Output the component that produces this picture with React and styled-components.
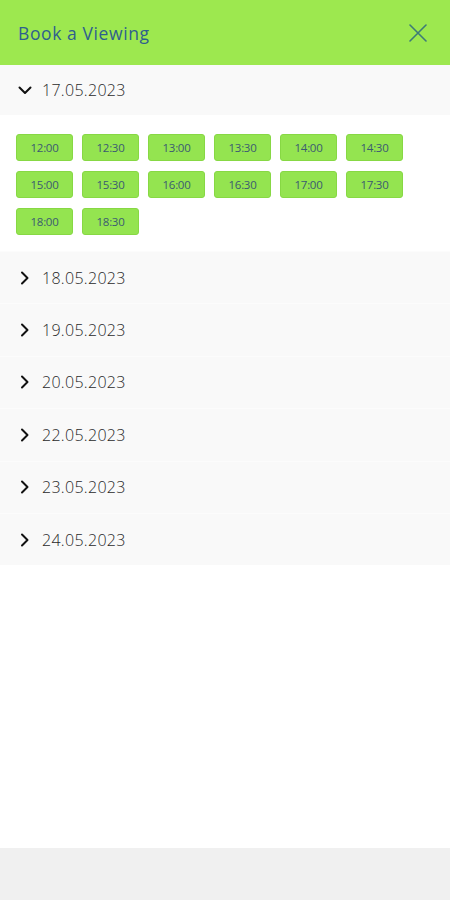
import React from "react";
import styled, { createGlobalStyle } from "styled-components";

const Global = createGlobalStyle`
  html, body { margin: 0; padding: 0; background: #fff; }
  body { font-family: "Open Sans", "Noto Sans", sans-serif; }
  * { box-sizing: border-box; }
`;

const Page = styled.div`
  width: 450px;
  height: 900px;
  display: flex;
  flex-direction: column;
  background: #fff;
`;

const Header = styled.header`
  height: 65px;
  flex: none;
  background: #9de84f;
  display: flex;
  align-items: center;
  justify-content: space-between;
  padding: 0 22px 0 18px;
`;

const Title = styled.h1`
  margin: 0;
  font-size: 17.5px;
  font-weight: 400;
  color: #2f5f8e;
  letter-spacing: 0.6px;
`;

const CloseBtn = styled.button`
  border: 0;
  background: none;
  padding: 0;
  width: 20px;
  height: 20px;
  display: flex;
  align-items: center;
  justify-content: center;
  cursor: pointer;
`;

const List = styled.div`
  flex: 1;
  display: flex;
  flex-direction: column;
`;

const DateRow = styled.div`
  height: ${(p) => (p.$first ? 50 : 52.4)}px;
  background: #f9f9f9;
  display: flex;
  align-items: center;
  gap: 9px;
  padding-left: 17px;
  border-top: ${(p) => (p.$first ? "none" : "1px solid #fcfcfc")};
`;

const DateText = styled.span`
  font-size: 16px;
  font-weight: 300;
  color: #2a2a2a;
  letter-spacing: 0.3px;
`;

const Slots = styled.div`
  padding: 19px 0 16px 16px;
  display: grid;
  grid-template-columns: repeat(6, max-content);
  column-gap: 9px;
  row-gap: 10px;
`;

const Slot = styled.button`
  width: 57px;
  height: 27px;
  border: 1px solid #87d844;
  border-radius: 3px;
  background: #94e450;
  color: #3b5a72;
  font-family: "Open Sans", sans-serif;
  font-size: 11.5px;
  font-weight: 400;
  letter-spacing: -0.3px;
  padding: 0;
  cursor: pointer;
`;

const Footer = styled.div`
  height: 52px;
  flex: none;
  background: #f0f0f0;
`;

const Chevron = ({ open }) => (
  <svg width="16" height="16" viewBox="0 0 16 16" fill="none">
    {open ? (
      <path d="M2.5 5.5 L8 11 L13.5 5.5" stroke="#111" strokeWidth="2" strokeLinecap="round" strokeLinejoin="round" />
    ) : (
      <path d="M5 2.5 L10.5 8 L5 13.5" stroke="#111" strokeWidth="2" strokeLinecap="round" strokeLinejoin="round" />
    )}
  </svg>
);

const times = [
  "12:00", "12:30", "13:00", "13:30", "14:00", "14:30",
  "15:00", "15:30", "16:00", "16:30", "17:00", "17:30",
  "18:00", "18:30",
];

const dates = ["18.05.2023", "19.05.2023", "20.05.2023", "22.05.2023", "23.05.2023", "24.05.2023"];

export default function App() {
  return (
    <Page>
      <Global />
      <Header>
        <Title>Book a Viewing</Title>
        <CloseBtn aria-label="Close">
          <svg width="18" height="18" viewBox="0 0 18 18">
            <path d="M1 1 L17 17 M17 1 L1 17" stroke="#3d7a78" strokeWidth="1.6" strokeLinecap="round" />
          </svg>
        </CloseBtn>
      </Header>
      <List>
        <DateRow $first>
          <Chevron open />
          <DateText>17.05.2023</DateText>
        </DateRow>
        <Slots>
          {times.map((t) => (
            <Slot key={t}>{t}</Slot>
          ))}
        </Slots>
        {dates.map((d) => (
          <DateRow key={d}>
            <Chevron />
            <DateText>{d}</DateText>
          </DateRow>
        ))}
      </List>
      <Footer />
    </Page>
  );
}
